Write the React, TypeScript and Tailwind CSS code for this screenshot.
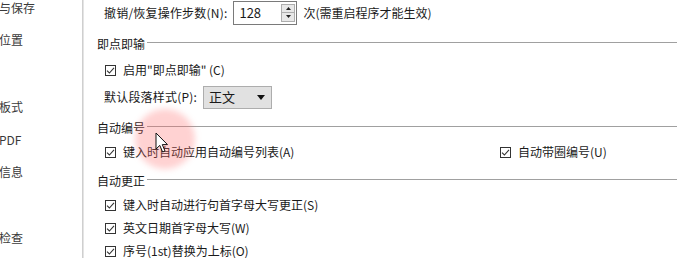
import React from 'react';

const font = "font-['Microsoft_YaHei','Noto_Sans_CJK_SC',sans-serif]";

const Check: React.FC = () => (
  <span className="w-[11px] h-[11px] border border-[#333] bg-white flex items-center justify-center shrink-0">
    <svg width="9" height="9" viewBox="0 0 9 9" fill="none">
      <path d="M1 4.6 L3.4 7 L8 1.8" stroke="#333" strokeWidth="1.1" />
    </svg>
  </span>
);

const CheckRow: React.FC<{ label: string; className?: string }> = ({ label, className = '' }) => (
  <label className={`flex items-center gap-[7px] ${className}`}>
    <Check />
    <span>{label}</span>
  </label>
);

const Section: React.FC<{ title: string; className?: string }> = ({ title, className = '' }) => (
  <div className={`flex items-center h-[18px] ${className}`}>
    <span className="pr-[2px]">{title}</span>
    <span className="flex-1 h-px bg-[#a0a0a0] -mt-[3px]" />
  </div>
);

const sideItems = [
  { label: '与保存', mt: 'mt-[0px]' },
  { label: '位置', mt: 'mt-[14px]' },
  { label: '板式', mt: 'mt-[49px]' },
  { label: 'PDF', mt: 'mt-[15px]' },
  { label: '信息', mt: 'mt-[14px]' },
  { label: '检查', mt: 'mt-[48px]' },
];

export default function App() {
  return (
    <div className={`w-[677px] h-[258px] bg-white flex overflow-hidden text-[12px] text-[#1a1a1a] ${font}`}>
      {/* left nav, clipped */}
      <div className="w-[82px] shrink-0 overflow-hidden text-[#3a3a3a] text-[12px]">
        <div className="-ml-[1px] flex flex-col leading-[18px] -mt-[1px]">
          {sideItems.map((s) => (
            <span key={s.label} className={s.mt}>{s.label}</span>
          ))}
        </div>
      </div>
      <div className="w-[1px] bg-[#cfcfcf] shrink-0" />
      <div className="w-[1px] bg-[#e4e4e4] shrink-0" />

      {/* main */}
      <div className="flex-1 relative pl-[13px]">
        <div className="flex items-center h-[25px] pl-[7px]">
          <span className="tracking-[0.2px]">撤销/恢复操作步数(N):</span>
          <div className="ml-[6px] w-[64px] h-[24px] border border-[#7a7a7a] flex items-stretch bg-white">
            <span className="flex-1 pl-[5px] flex items-center text-[13px]">128</span>
            <div className="w-[14px] flex flex-col my-[2px] mr-[1px]">
              <span className="flex-1 bg-[#e8e8e8] border border-[#adadad] flex items-center justify-center">
                <svg width="5" height="3" viewBox="0 0 5 3"><path d="M0 3 L2.5 0 L5 3Z" fill="#222" /></svg>
              </span>
              <span className="flex-1 bg-[#e8e8e8] border border-[#adadad] border-t-0 flex items-center justify-center">
                <svg width="5" height="3" viewBox="0 0 5 3"><path d="M0 0 L2.5 3 L5 0Z" fill="#222" /></svg>
              </span>
            </div>
          </div>
          <span className="ml-[6px]">次(需重启程序才能生效)</span>
        </div>

        <Section title="即点即输" className="mt-[10px]" />
        <CheckRow label={'启用"即点即输" (C)'} className="mt-[8px] h-[18px] pl-[8px]" />
        <div className="flex items-center h-[24px] mt-[6px] pl-[7px]">
          <span className="tracking-[0.2px]">默认段落样式(P):</span>
          <div className="ml-[6px] w-[69px] h-[23px] bg-[#e1e1e1] border border-[#adadad] flex items-center pl-[5px] pr-[6px]">
            <span className="flex-1 text-[13px]">正文</span>
            <svg width="8" height="5" viewBox="0 0 8 5"><path d="M0 0 L8 0 L4 5Z" fill="#111" /></svg>
          </div>
        </div>

        <Section title="自动编号" className="mt-[10px]" />
        <div className="flex items-center h-[18px] mt-[6px]">
          <CheckRow label="键入时自动应用自动编号列表(A)" className="pl-[8px] w-[403px]" />
          <CheckRow label="自动带圈编号(U)" />
        </div>

        <Section title="自动更正" className="mt-[11px]" />
        <CheckRow label="键入时自动进行句首字母大写更正(S)" className="mt-[6px] h-[18px] pl-[8px]" />
        <CheckRow label="英文日期首字母大写(W)" className="mt-[5px] h-[18px] pl-[8px]" />
        <CheckRow label="序号(1st)替换为上标(O)" className="mt-[5px] h-[18px] pl-[8px]" />

        {/* click highlight + cursor overlay */}
        <div className="absolute left-[51px] top-[109px] w-[60px] h-[60px] rounded-full bg-[#ff6b6b]/30 blur-[3px] pointer-events-none" />
        <svg className="absolute left-[71px] top-[132px] pointer-events-none" width="14" height="22" viewBox="0 0 14 22">
          <path d="M1 1 L1 17 L4.8 13.4 L7.6 20 L10 19 L7.3 12.6 L12.5 12.6 Z" fill="#fff" stroke="#111" strokeWidth="1" strokeLinejoin="round" />
        </svg>
      </div>
    </div>
  );
}
